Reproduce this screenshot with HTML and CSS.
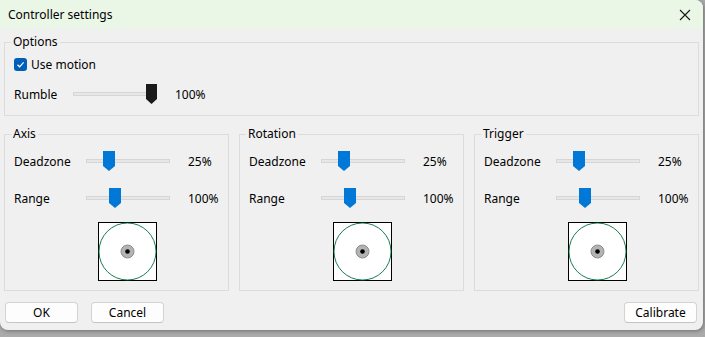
FILE: index.html
```html
<!DOCTYPE html>
<html lang="en">
    <head>
        <meta charset="UTF-8">
        <title>Controller settings</title>
        <link rel="stylesheet" href="styles.css">
    </head>
    <body>
        <div class="window">
            <div class="title-bar">
                <span>Controller settings</span>
                <svg class="close" width="12" height="12" viewBox="0 0 12 12">
                    <path d="M1 1 L11 11 M11 1 L1 11" stroke="#1a1a1a" stroke-width="1.1" fill="none"/>
                </svg>
            </div>

            <fieldset class="group options">
                <legend>Options</legend>
                <label class="check-row">
                    <span class="checkbox">
                        <svg width="13" height="13" viewBox="0 0 13 13">
                            <path d="M3.5 6.8 L5.6 8.8 L9.6 4.4" stroke="#fff" stroke-width="1.2" fill="none"/>
                        </svg>
                    </span>
                    <span>Use motion</span>
                </label>
                <div class="row rumble">
                    <span class="label">Rumble</span>
                    <div class="slider">
                        <div class="track"></div>
                        <svg class="thumb" style="left: 73px" width="11" height="20" viewBox="0 0 11 20">
                            <path d="M0 0 H11 V15 L5.5 20 L0 15 Z" fill="#1a1a1a"/>
                        </svg>
                    </div>
                    <span class="value">100%</span>
                </div>
            </fieldset>

            <div class="groups">
                <fieldset class="group stick">
                    <legend>Axis</legend>
                    <div class="row">
                        <span class="label">Deadzone</span>
                        <div class="slider">
                            <div class="track"></div>
                            <svg class="thumb" style="left: 17px" width="12" height="20" viewBox="0 0 12 20">
                                <path d="M0 0 H12 V15 L6 20 L0 15 Z" fill="#0078d7"/>
                            </svg>
                        </div>
                        <span class="value">25%</span>
                    </div>
                    <div class="row">
                        <span class="label">Range</span>
                        <div class="slider">
                            <div class="track"></div>
                            <svg class="thumb" style="left: 23px" width="12" height="20" viewBox="0 0 12 20">
                                <path d="M0 0 H12 V15 L6 20 L0 15 Z" fill="#0078d7"/>
                            </svg>
                        </div>
                        <span class="value">100%</span>
                    </div>
                    <svg class="pad" width="59" height="59" viewBox="0 0 59 59">
                        <rect x="0.5" y="0.5" width="58" height="58" fill="#fff" stroke="#000"/>
                        <circle cx="29.5" cy="29.5" r="28.5" fill="none" stroke="#006b3a" stroke-width="0.9"/>
                        <circle cx="29.5" cy="29.5" r="6.5" fill="#b3b3b3" stroke="#8c8c8c"/>
                        <circle cx="29.5" cy="29.5" r="2.3" fill="#000"/>
                    </svg>
                </fieldset>

                <fieldset class="group stick">
                    <legend>Rotation</legend>
                    <div class="row">
                        <span class="label">Deadzone</span>
                        <div class="slider">
                            <div class="track"></div>
                            <svg class="thumb" style="left: 17px" width="12" height="20" viewBox="0 0 12 20">
                                <path d="M0 0 H12 V15 L6 20 L0 15 Z" fill="#0078d7"/>
                            </svg>
                        </div>
                        <span class="value">25%</span>
                    </div>
                    <div class="row">
                        <span class="label">Range</span>
                        <div class="slider">
                            <div class="track"></div>
                            <svg class="thumb" style="left: 23px" width="12" height="20" viewBox="0 0 12 20">
                                <path d="M0 0 H12 V15 L6 20 L0 15 Z" fill="#0078d7"/>
                            </svg>
                        </div>
                        <span class="value">100%</span>
                    </div>
                    <svg class="pad" width="59" height="59" viewBox="0 0 59 59">
                        <rect x="0.5" y="0.5" width="58" height="58" fill="#fff" stroke="#000"/>
                        <circle cx="29.5" cy="29.5" r="28.5" fill="none" stroke="#006b3a" stroke-width="0.9"/>
                        <circle cx="29.5" cy="29.5" r="6.5" fill="#b3b3b3" stroke="#8c8c8c"/>
                        <circle cx="29.5" cy="29.5" r="2.3" fill="#000"/>
                    </svg>
                </fieldset>

                <fieldset class="group stick">
                    <legend>Trigger</legend>
                    <div class="row">
                        <span class="label">Deadzone</span>
                        <div class="slider">
                            <div class="track"></div>
                            <svg class="thumb" style="left: 17px" width="12" height="20" viewBox="0 0 12 20">
                                <path d="M0 0 H12 V15 L6 20 L0 15 Z" fill="#0078d7"/>
                            </svg>
                        </div>
                        <span class="value">25%</span>
                    </div>
                    <div class="row">
                        <span class="label">Range</span>
                        <div class="slider">
                            <div class="track"></div>
                            <svg class="thumb" style="left: 23px" width="12" height="20" viewBox="0 0 12 20">
                                <path d="M0 0 H12 V15 L6 20 L0 15 Z" fill="#0078d7"/>
                            </svg>
                        </div>
                        <span class="value">100%</span>
                    </div>
                    <svg class="pad" width="59" height="59" viewBox="0 0 59 59">
                        <rect x="0.5" y="0.5" width="58" height="58" fill="#fff" stroke="#000"/>
                        <circle cx="29.5" cy="29.5" r="28.5" fill="none" stroke="#006b3a" stroke-width="0.9"/>
                        <circle cx="29.5" cy="29.5" r="6.5" fill="#b3b3b3" stroke="#8c8c8c"/>
                        <circle cx="29.5" cy="29.5" r="2.3" fill="#000"/>
                    </svg>
                </fieldset>
            </div>

            <div class="button-bar">
                <button>OK</button>
                <button>Cancel</button>
                <span class="spacer"></span>
                <button>Calibrate</button>
            </div>
        </div>
    </body>
</html>
```

FILE: styles.css
```css
body {
    font-family: "Noto Sans", "Liberation Sans", sans-serif;
    font-size: 12px;
    color: #000;
    margin: 0;
    padding: 0;
    background-color: #ababab;
    width: 705px;
    height: 337px;
    overflow: hidden;
}

.window {
    width: 703px;
    height: 330px;
    display: flex;
    flex-direction: column;
    background-color: #f0f0f0;
    border-radius: 0 8px 8px 8px;
    box-shadow: 1px 1px 4px rgba(0, 0, 0, 0.35);
    overflow: hidden;
}

.title-bar {
    height: 29px;
    flex: none;
    display: flex;
    justify-content: space-between;
    align-items: center;
    padding: 0 10px 0 8px;
    background-color: #eaf7e7;
    line-height: 14px;
}

.close {
    margin-right: 2px;
}

.group {
    margin: 0;
    padding: 0 8px;
    border: 1px solid #dcdcdc;
    min-width: 0;
}

.group legend {
    padding: 0 2px;
    margin-left: -2px;
    line-height: 14px;
}

.options {
    margin: 6px 4px 0 4px;
    padding-bottom: 11px;
}

.check-row {
    display: flex;
    align-items: center;
    gap: 4px;
    height: 14px;
    margin-top: 8px;
    margin-left: 1px;
}

.checkbox {
    width: 13px;
    height: 13px;
    border-radius: 3px;
    background-color: #005fb8;
    display: flex;
}

.row {
    display: flex;
    align-items: center;
    height: 20px;
    margin-left: 1px;
}

.rumble {
    margin-top: 13px;
}

.label {
    width: 72px;
}

.rumble .label {
    width: 59px;
}

.slider {
    position: relative;
    width: 84px;
    height: 20px;
    display: flex;
    align-items: center;
}

.track {
    width: 100%;
    height: 2px;
    background-color: #e7e7e7;
    border: 1px solid #d6d6d6;
}

.thumb {
    position: absolute;
    top: 0;
}

.value {
    margin-left: 18px;
}

.groups {
    display: grid;
    grid-template-columns: 1fr 1fr 1fr;
    gap: 10px;
    margin: 11px 4px 0 4px;
}

.stick {
    padding-bottom: 9px;
}

.stick .row {
    margin-top: 17px;
}

.stick .row:first-of-type {
    margin-top: 10px;
}

.pad {
    display: block;
    margin: 14px 0 0 85px;
}

.button-bar {
    display: flex;
    gap: 13px;
    margin: 11px 6px 0 5px;
}

.spacer {
    flex: 1;
}

.button-bar button {
    width: 73px;
    height: 21px;
    padding: 0;
    font-family: inherit;
    font-size: 12px;
    color: #000;
    background-color: #fdfdfd;
    border: 1px solid #d3d3d3;
    border-bottom-color: #c4c4c4;
    border-radius: 4px;
}
```
